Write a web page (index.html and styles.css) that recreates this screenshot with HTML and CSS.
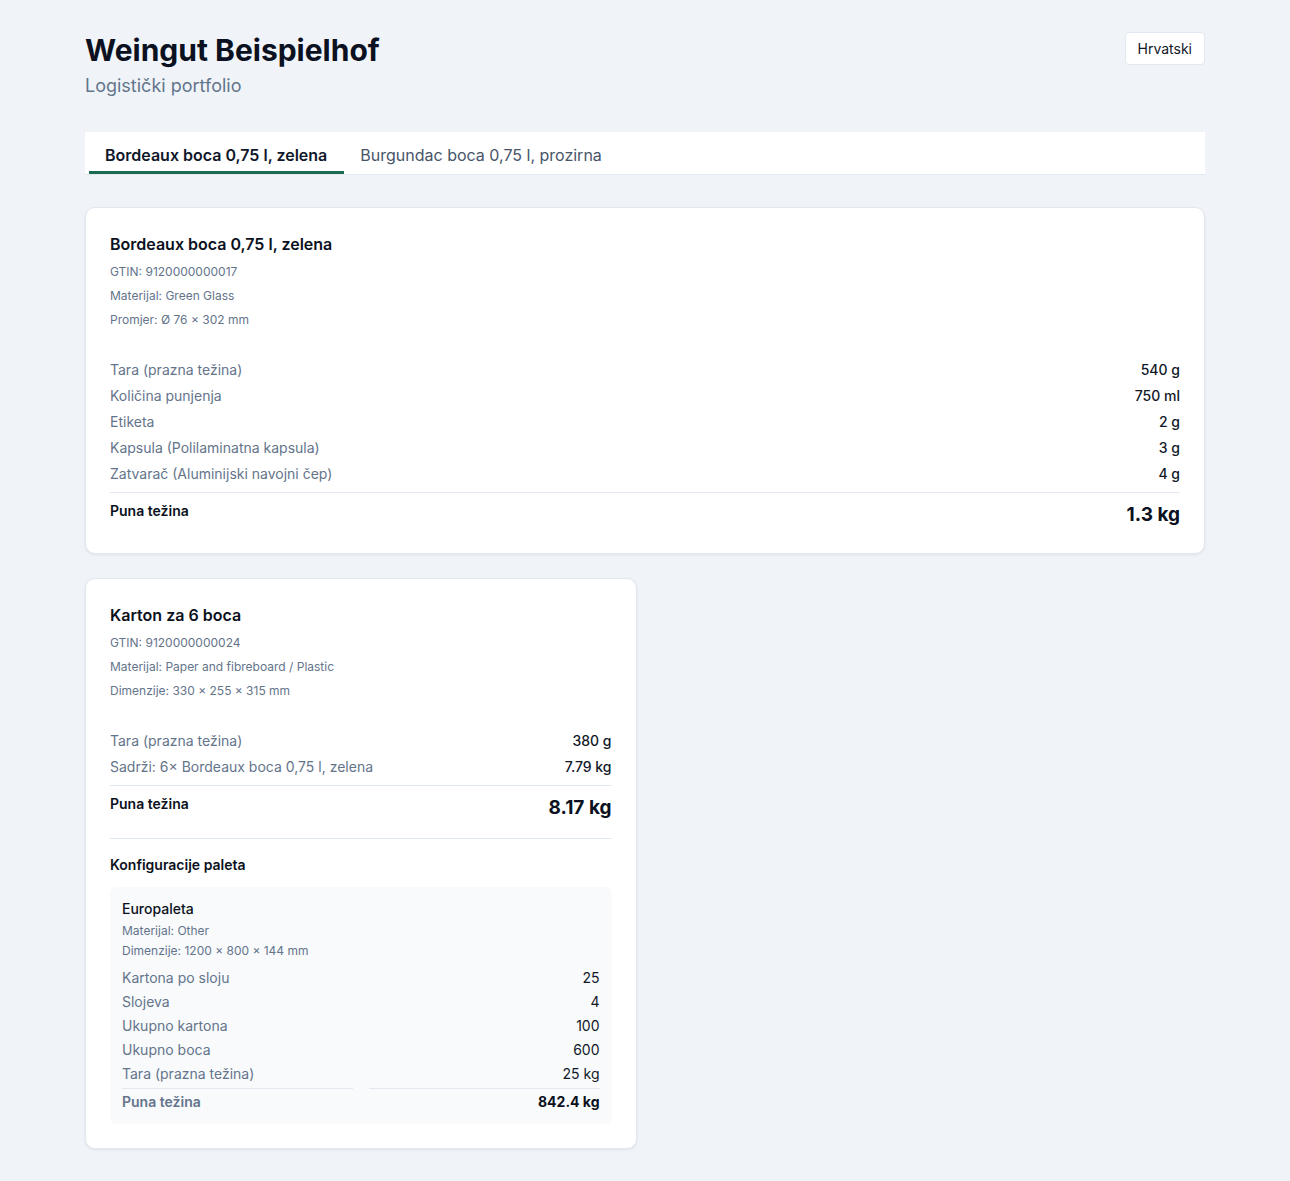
FILE: index.html
```html
<!DOCTYPE html>
<html lang="hr">
<head>
  <meta charset="UTF-8">
  <meta name="viewport" content="width=device-width, initial-scale=1.0">
  <title>Weingut Beispielhof</title>
  <link rel="stylesheet" href="styles.css">
</head>
<body>
  <div class="page">
    <header class="top">
      <div>
        <h1>Weingut Beispielhof</h1>
        <p class="subtitle">Logistički portfolio</p>
      </div>
      <button type="button" class="lang">Hrvatski</button>
    </header>

    <nav class="tabs">
      <button type="button" class="tab active">Bordeaux boca 0,75 l, zelena</button>
      <button type="button" class="tab">Burgundac boca 0,75 l, prozirna</button>
    </nav>

    <main class="cards">
      <section class="card wide">
        <h2>Bordeaux boca 0,75 l, zelena</h2>
        <div class="meta">
          <div>GTIN: 9120000000017</div>
          <div>Materijal: Green Glass</div>
          <div>Promjer: Ø 76 × 302 mm</div>
        </div>
        <div class="rows">
          <div class="row"><span>Tara (prazna težina)</span><b>540 g</b></div>
          <div class="row"><span>Količina punjenja</span><b>750 ml</b></div>
          <div class="row"><span>Etiketa</span><b>2 g</b></div>
          <div class="row"><span>Kapsula (Polilaminatna kapsula)</span><b>3 g</b></div>
          <div class="row"><span>Zatvarač (Aluminijski navojni čep)</span><b>4 g</b></div>
        </div>
        <div class="total"><span>Puna težina</span><b>1.3 kg</b></div>
      </section>

      <section class="card">
        <h2>Karton za 6 boca</h2>
        <div class="meta">
          <div>GTIN: 9120000000024</div>
          <div>Materijal: Paper and fibreboard / Plastic</div>
          <div>Dimenzije: 330 × 255 × 315 mm</div>
        </div>
        <div class="rows">
          <div class="row"><span>Tara (prazna težina)</span><b>380 g</b></div>
          <div class="row"><span>Sadrži: 6× Bordeaux boca 0,75 l, zelena</span><b>7.79 kg</b></div>
        </div>
        <div class="total"><span>Puna težina</span><b>8.17 kg</b></div>

        <div class="pallets">
          <h3>Konfiguracije paleta</h3>
          <div class="pallet">
            <div class="pallet-name">Europaleta</div>
            <div class="pallet-meta">
              <div>Materijal: Other</div>
              <div>Dimenzije: 1200 × 800 × 144 mm</div>
            </div>
            <dl class="pallet-grid">
              <dt>Kartona po sloju</dt><dd>25</dd>
              <dt>Slojeva</dt><dd>4</dd>
              <dt>Ukupno kartona</dt><dd>100</dd>
              <dt>Ukupno boca</dt><dd>600</dd>
              <dt>Tara (prazna težina)</dt><dd>25 kg</dd>
              <dt class="sum">Puna težina</dt><dd class="sum">842.4 kg</dd>
            </dl>
          </div>
        </div>
      </section>
    </main>
  </div>
</body>
</html>
```

FILE: styles.css
```css
* {
  box-sizing: border-box;
}
body {
  margin: 0;
  background: #f0f4f9;
  font-family: Inter, "Noto Sans", sans-serif;
  color: #0f172a;
}
.page {
  max-width: 1120px;
  margin: 0 auto;
  padding: 31px 0 32px;
}
.top {
  display: flex;
  justify-content: space-between;
  align-items: flex-start;
}
h1 {
  margin: 0;
  font-size: 30px;
  line-height: 38px;
  font-weight: 700;
  color: #0b1120;
}
.subtitle {
  margin: 5px 0 0;
  font-size: 18px;
  line-height: 24px;
  color: #64748b;
}
.lang {
  margin-top: 1px;
  height: 33px;
  padding: 0 12px;
  background: #fff;
  border: 1px solid #e2e8f0;
  border-radius: 4px;
  font-family: inherit;
  font-size: 14px;
  color: #111827;
}
.tabs {
  display: flex;
  margin-top: 34px;
  padding: 0 4px;
  background: #fff;
  border-bottom: 1px solid #e2e8f0;
}
.tab {
  padding: 12px 17px 5px 16px;
  background: none;
  border: none;
  border-bottom: 3px solid transparent;
  font-family: inherit;
  font-size: 16px;
  line-height: 22px;
  color: #475569;
}
.tab.active {
  border-bottom-color: #1b6b52;
  color: #0f172a;
  font-weight: 600;
}
.cards {
  display: grid;
  grid-template-columns: 1fr 1fr;
  column-gap: 17px;
  row-gap: 24px;
  margin-top: 32px;
}
.card {
  background: #fff;
  border: 1px solid #e2e8f0;
  border-radius: 10px;
  box-shadow: 0 1px 3px rgba(15, 23, 42, 0.08);
  padding: 24px;
}
.card.wide {
  grid-column: 1 / -1;
}
h2 {
  margin: 0;
  font-size: 16px;
  line-height: 24px;
  font-weight: 600;
  color: #0b1120;
}
.meta {
  margin-top: 3px;
  font-size: 12px;
  line-height: 24px;
  color: #64748b;
}
.meta div:first-child {
  padding-top: 1px;
}
.rows {
  margin-top: 25px;
}
.row {
  display: flex;
  justify-content: space-between;
  font-size: 14px;
  line-height: 26px;
}
.row span {
  color: #64748b;
}
.row b {
  font-weight: 500;
  color: #111827;
}
.total {
  display: flex;
  justify-content: space-between;
  align-items: flex-start;
  margin-top: 5px;
  padding-top: 8px;
  border-top: 1px solid #e2e8f0;
}
.total span {
  font-size: 14px;
  line-height: 20px;
  font-weight: 600;
  color: #0b1120;
}
.total b {
  font-size: 19px;
  line-height: 28px;
  font-weight: 700;
  color: #0b1120;
}
.pallets {
  margin-top: 16px;
  padding-top: 16px;
  border-top: 1px solid #e2e8f0;
}
h3 {
  margin: 0;
  font-size: 14px;
  line-height: 20px;
  font-weight: 600;
  color: #0b1120;
}
.pallet {
  margin-top: 12px;
  padding: 12px;
  background: #f8fafc;
  border-radius: 6px;
}
.pallet-name {
  font-size: 14px;
  line-height: 20px;
  font-weight: 500;
  color: #0b1120;
}
.pallet-meta {
  padding-top: 2px;
  font-size: 12px;
  line-height: 20px;
  color: #64748b;
}
.pallet-grid {
  display: grid;
  grid-template-columns: 1fr 1fr;
  column-gap: 16px;
  margin: 5px 0 0;
  font-size: 14px;
  line-height: 24px;
}
.pallet-grid dt {
  color: #64748b;
}
.pallet-grid dd {
  margin: 0;
  text-align: right;
  color: #111827;
}
.pallet-grid .sum {
  margin-top: 2px;
  padding-top: 3px;
  border-top: 1px solid #e2e8f0;
  line-height: 20px;
  font-weight: 600;
}
.pallet-grid dd.sum {
  font-weight: 700;
  color: #0b1120;
}
```
